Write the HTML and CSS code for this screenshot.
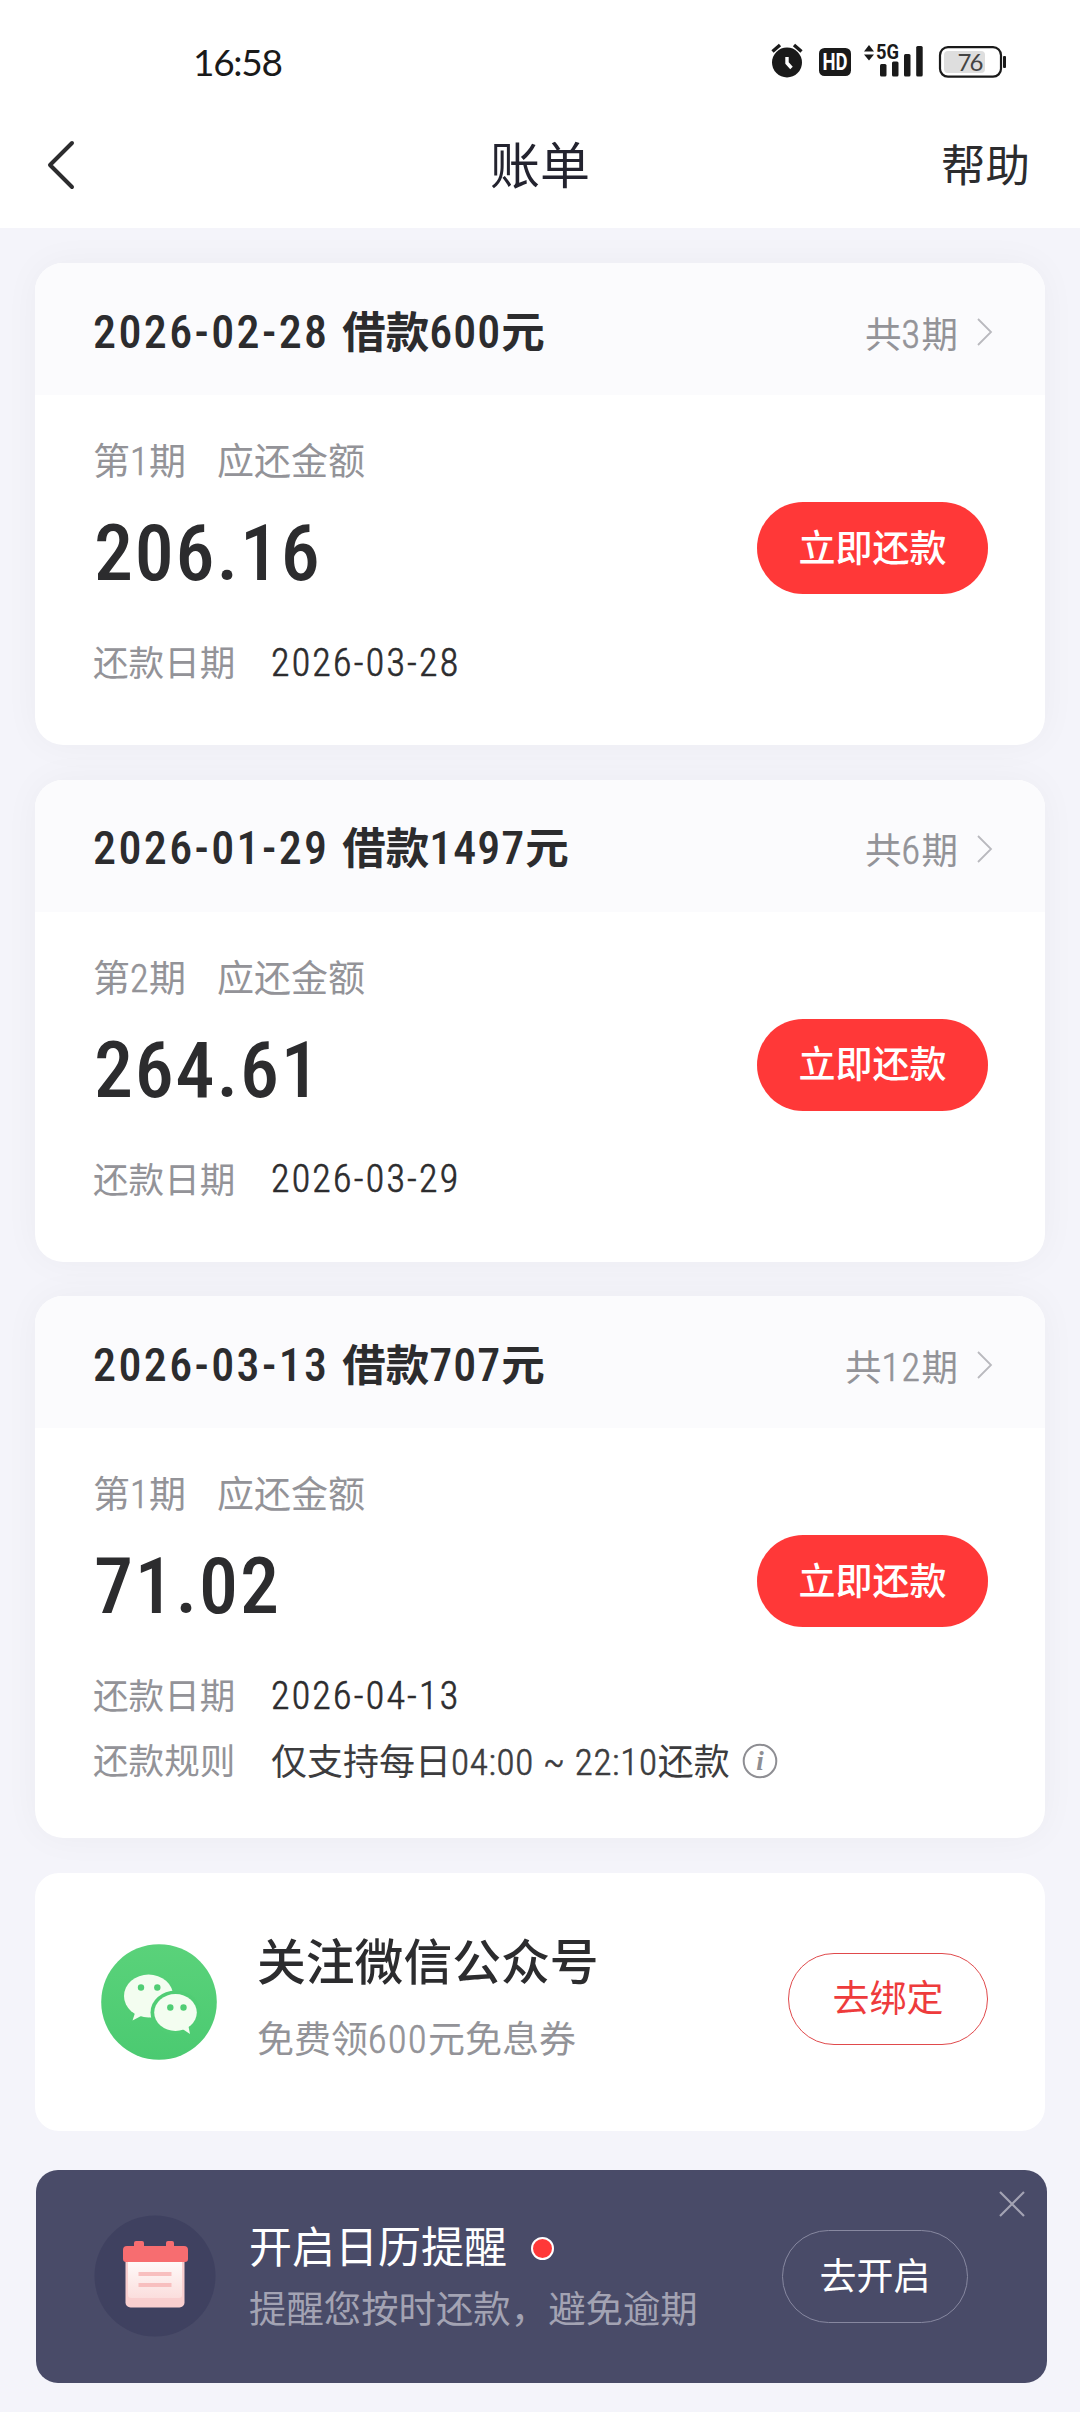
FILE: index.html
```html
<!DOCTYPE html>
<html lang="zh-CN">
<head>
<meta charset="utf-8">
<title>账单</title>
<link rel="stylesheet" href="styles.css">
</head>
<body>
<header class="top">
  <div class="status">
    <span class="clock">16:58</span>
    <svg class="status-icons" width="236" height="40" viewBox="0 0 236 40">
      <g fill="#1a1a1a">
        <circle cx="16" cy="21.5" r="15"/>
        <path d="M1.5 10.5 9 4M30.500 10.500 23 4" stroke="#1a1a1a" stroke-width="3.400"/>
        <rect x="48" y="7" width="32" height="28" rx="5.500"/>
        <path d="M93 10.500 98 4l5 6.500zM93 13.500 98 19.500l5-6z"/>
        <rect x="109" y="23" width="6.500" height="12.500" rx="1.500"/>
        <rect x="121" y="20.500" width="6.500" height="15" rx="1.500"/>
        <rect x="133" y="13" width="6.500" height="22.500" rx="1.500"/>
        <rect x="145.200" y="5" width="6.500" height="30.500" rx="1.500"/>
        <rect x="232" y="15" width="3" height="12" rx="1"/>
      </g>
      <path d="M16 16v6l4.500 5" fill="none" stroke="#fff" stroke-width="3.400"/>
      <rect x="173" y="10" width="41" height="22" rx="4" fill="#dedede"/>
      <rect x="169" y="6.200" width="61" height="29.500" rx="8" fill="none" stroke="#1a1a1a" stroke-width="2.200"/>
      <text class="hd" x="64" y="29" text-anchor="middle" textLength="25" lengthAdjust="spacingAndGlyphs">HD</text>
      <text class="net" x="105" y="18" textLength="23" lengthAdjust="spacingAndGlyphs">5G</text>
      <text class="level" x="199.500" y="29.500" text-anchor="middle" textLength="26">76</text>
    </svg>
  </div>
  <nav class="nav">
    <svg class="back" width="32" height="52" viewBox="0 0 32 52"><path d="M28 4 6 26l22 22" fill="none" stroke="#2c2c2e" stroke-width="4" stroke-linecap="round" stroke-linejoin="round"/></svg>
    <h1 class="nav-title">账单</h1>
    <a class="help">帮助</a>
  </nav>
</header>

<main class="bills">
  <section class="card">
    <div class="card-head">
      <h2 class="loan"><span class="num loan-date">2026-02-28</span> 借款<span class="num">600</span>元</h2>
      <span class="terms">共<span class="num">3</span>期</span>
      <svg class="chevron" width="18" height="32" viewBox="0 0 18 32"><path d="m2 3 13 13L2 29" fill="none" stroke="#b9b9be" stroke-width="1.800"/></svg>
    </div>
    <div class="card-body">
      <div class="due">
        <div>
          <p class="due-label"><span>第<span class="num">1</span>期</span><span>应还金额</span></p>
          <p class="amount">206.16</p>
        </div>
        <button class="pay">立即还款</button>
      </div>
      <p class="meta"><span class="meta-key">还款日期</span><span class="meta-date">2026-03-28</span></p>
    </div>
  </section>

  <section class="card">
    <div class="card-head">
      <h2 class="loan"><span class="num loan-date">2026-01-29</span> 借款<span class="num">1497</span>元</h2>
      <span class="terms">共<span class="num">6</span>期</span>
      <svg class="chevron" width="18" height="32" viewBox="0 0 18 32"><path d="m2 3 13 13L2 29" fill="none" stroke="#b9b9be" stroke-width="1.800"/></svg>
    </div>
    <div class="card-body">
      <div class="due">
        <div>
          <p class="due-label"><span>第<span class="num">2</span>期</span><span>应还金额</span></p>
          <p class="amount">264.61</p>
        </div>
        <button class="pay">立即还款</button>
      </div>
      <p class="meta"><span class="meta-key">还款日期</span><span class="meta-date">2026-03-29</span></p>
    </div>
  </section>

  <section class="card">
    <div class="card-head">
      <h2 class="loan"><span class="num loan-date">2026-03-13</span> 借款<span class="num">707</span>元</h2>
      <span class="terms">共<span class="num">12</span>期</span>
      <svg class="chevron" width="18" height="32" viewBox="0 0 18 32"><path d="m2 3 13 13L2 29" fill="none" stroke="#b9b9be" stroke-width="1.800"/></svg>
    </div>
    <div class="card-body card-body-rule">
      <div class="due">
        <div>
          <p class="due-label"><span>第<span class="num">1</span>期</span><span>应还金额</span></p>
          <p class="amount">71.02</p>
        </div>
        <button class="pay">立即还款</button>
      </div>
      <p class="meta"><span class="meta-key">还款日期</span><span class="meta-date">2026-04-13</span></p>
      <p class="meta"><span class="meta-key">还款规则</span><span class="meta-rule">仅支持每日<span class="num">04:00 ~ 22:10</span>还款</span>
        <svg class="info" width="36" height="36" viewBox="0 0 36 36"><circle cx="18" cy="18" r="16.300" fill="none" stroke="#8e8e93" stroke-width="2"/><text x="18" y="27" text-anchor="middle">i</text></svg>
      </p>
    </div>
  </section>

  <section class="follow">
    <svg width="116" height="116" viewBox="0 0 116 116">
      <defs><linearGradient id="green" x1="0" y1="0" x2="0" y2="1"><stop offset="0" stop-color="#5ad27a"/><stop offset="1" stop-color="#4bca71"/></linearGradient></defs>
      <circle cx="58" cy="58" r="57.800" fill="url(#green)"/>
      <path d="M35 66 31.500 76.500 41 71.500 50.500 73.500V66z" fill="#f3fdf0"/>
      <ellipse cx="47.600" cy="52" rx="24.600" ry="21.500" fill="#f3fdf0"/>
      <ellipse cx="74.500" cy="68.500" rx="25" ry="22" fill="#50cd74"/>
      <path d="m80 84 9 6-2-10z" fill="#f3fdf0"/>
      <ellipse cx="74.500" cy="68.500" rx="21.300" ry="18.500" fill="#f3fdf0"/>
      <g fill="#50cd74"><circle cx="40" cy="43.500" r="3.200"/><circle cx="56.300" cy="43.500" r="3.200"/><circle cx="69.300" cy="63.500" r="3.200"/><circle cx="82.500" cy="63.500" r="3.200"/></g>
    </svg>
    <div class="follow-text">
      <h3 class="follow-title">关注微信公众号</h3>
      <p class="follow-sub">免费领<span class="num">600</span>元免息券</p>
    </div>
    <button class="bind">去绑定</button>
  </section>
</main>

<aside class="remind">
  <svg width="122" height="122" viewBox="0 0 122 122">
    <defs><linearGradient id="page" x1="0" y1="0" x2="0" y2="1"><stop offset="0" stop-color="#fff"/><stop offset="1" stop-color="#fbdedd"/></linearGradient></defs>
    <circle cx="61" cy="61" r="60.500" fill="#3f4160"/>
    <rect x="31.500" y="36" width="59" height="56.500" rx="5" fill="#f9cfcf"/>
    <rect x="34" y="40" width="54" height="43" rx="3" fill="url(#page)"/>
    <path d="M42 26h6a2 2 0 0 1 2 2v3h22v-3a2 2 0 0 1 2-2h4a2 2 0 0 1 2 2v3h10a4 4 0 0 1 4 4v9q0 3-3 3H32q-3 0-3-3v-9a4 4 0 0 1 4-4h7v-3a2 2 0 0 1 2-2z" fill="#f76d70"/>
    <path d="M44.500 59h33M44.500 70h33" stroke="#f8bfbf" stroke-width="4.200"/>
  </svg>
  <div class="remind-text">
    <h3 class="remind-title">开启日历提醒<i class="dot"></i></h3>
    <p class="remind-sub">提醒您按时还款，避免逾期</p>
  </div>
  <button class="open">去开启</button>
  <svg class="close" width="30" height="30" viewBox="0 0 30 30"><path d="m3 3 24 24M27 3 3 27" stroke="#a3a3b3" stroke-width="2.200"/></svg>
</aside>
</body>
</html>
```

FILE: styles.css
```css
* { box-sizing: border-box; margin: 0; padding: 0; }

body {
  width: 1080px;
  height: 2412px;
  overflow: hidden;
  background: #f4f4fa;
  color: #2c2c2e;
  font-family: "Noto Sans CJK SC", sans-serif;
  font-weight: 400;
  white-space: nowrap;
}

h1, h2, h3 { font-weight: 400; }

button {
  border: 0;
  background: none;
  font-family: inherit;
  font-size: 37px;
  line-height: 54px;
  padding: 0 0 5px;
}

.num, .amount, .meta-date {
  font-family: Roboto, "Noto Sans CJK SC", sans-serif;
  font-stretch: 85%;
}
.num { line-height: 0; letter-spacing: 1px; }

/* Light digits get a hairline so they keep the weight of the characters beside them */
.terms .num, .due-label .num, .meta-date, .meta-rule .num, .follow-sub .num {
  font-weight: 300;
  -webkit-text-stroke: .6px currentColor;
}

/* Status bar and navigation */
.top { height: 228px; background: #fff; position: relative; z-index: 1; }
.status {
  height: 100px;
  padding: 20px 73px 0 193px;
  display: flex;
  justify-content: space-between;
}
.clock { font: 400 37px/83px Lato, sans-serif; letter-spacing: -1.300px; color: #1a1a1a; }
.status-icons { margin-top: 21px; }
.hd, .net { font: 700 24px Roboto, sans-serif; }
.hd { fill: #fff; }
.net { fill: #1a1a1a; font-size: 20px; }
.level { font: 400 24px Lato, sans-serif; fill: #444; }

.nav {
  height: 128px;
  padding: 0 50px 0 44px;
  display: grid;
  grid-template-columns: 1fr auto 1fr;
  align-items: center;
}
.back { margin-bottom: 5px; }
.nav-title { font-size: 50px; line-height: 124px; color: #23232f; padding-bottom: 10px; transform: translateX(3px); }
.help { font-size: 44.500px; line-height: 124px; justify-self: end; padding-bottom: 9px; }

/* Bills */
.bills { padding: 35px 35px 0; display: grid; row-gap: 34.5px; }
.card {
  border-radius: 28px;
  background: #fff;
  overflow: hidden;
  box-shadow: 0 0 36px rgba(20, 20, 40, .04);
}
.card-head {
  height: 132px;
  padding: 0 51px 0 58px;
  display: flex;
  align-items: center;
  background: #fbfbfd;
}
.loan { flex: 1; font-size: 43.500px; font-weight: 700; line-height: 64px; padding-top: 1px; word-spacing: 3px; }
.loan .num { font-size: 46px; font-weight: 500; }
.loan .loan-date { letter-spacing: 2.400px; }
.terms { font-size: 36.500px; line-height: 54px; color: #939398; padding-top: 7px; }
.terms .num { font-size: 38px; letter-spacing: 1.500px; }
.chevron { margin: 6px 0 0 18px; }

.card-body { padding: 33px 57px 50px 58px; }
.card-body-rule { padding-bottom: 45px; }
.due { display: flex; justify-content: space-between; align-items: flex-end; height: 182px; }
.due-label { display: flex; gap: 31px; font-size: 37px; line-height: 62px; height: 70px; color: #939398; }
.due-label .num { font-size: 38px; letter-spacing: .5px; }
.amount { padding-left: 1px; font-size: 78px; line-height: 112px; font-weight: 500; letter-spacing: 1.800px; }
.pay { width: 231px; height: 92px; margin-bottom: 16px; border-radius: 46px; background: #ff3838; color: #fff; font-weight: 500; }
.meta { height: 65px; display: flex; align-items: center; font-size: 36px; line-height: 60px; }
.due + .meta { margin-top: 20px; }
.meta-key { width: 178px; color: #939398; padding-bottom: 3px; font-size: 35.600px; }
.meta-date { font-size: 38px; letter-spacing: 2.200px; }
.meta-rule { padding-bottom: 3px; color: #3c3c3e; }
.meta-rule .num { font-size: 37px; letter-spacing: .7px; }
.info { margin-left: 12px; }
.info text { font: italic 700 27px "Liberation Serif", serif; fill: #8e8e93; }

/* Official account card */
.follow {
  height: 258px;
  padding: 0 57px 0 66px;
  display: flex;
  align-items: center;
  border-radius: 24px;
  background: #fff;
}
.follow-text { flex: 1; margin-left: 40px; padding-bottom: 5px; }
.follow-title { font-size: 48.800px; line-height: 76px; font-weight: 500; }
.follow-sub { font-size: 37px; line-height: 81px; color: #939398; }
.follow-sub .num { font-size: 38px; letter-spacing: 1.500px; }
.bind { width: 200px; height: 92px; margin-bottom: 6px; border: 1.500px solid #e04a4c; border-radius: 46px; color: #ee3b3c; }

/* Calendar reminder */
.remind {
  position: relative;
  width: 1011px;
  height: 213px;
  margin: 39px 0 0 36px;
  padding: 0 79px 0 58px;
  display: flex;
  align-items: center;
  border-radius: 22px;
  background: #494b68;
}
.remind-text { flex: 1; margin-left: 33px; }
.remind-title { display: flex; align-items: center; font-size: 43px; line-height: 62px; color: #fff; }
.remind-sub { font-size: 37.400px; line-height: 64px; color: #a3a3b3; }
.dot { width: 23px; height: 23px; margin: 9px 0 0 24px; border: 2px solid #fff; border-radius: 50%; background: #ff3838; }
.open { width: 186px; height: 93px; border: 1px solid #8788a0; border-radius: 47px; color: #fff; }
.close { position: absolute; top: 19px; right: 20px; }
```
